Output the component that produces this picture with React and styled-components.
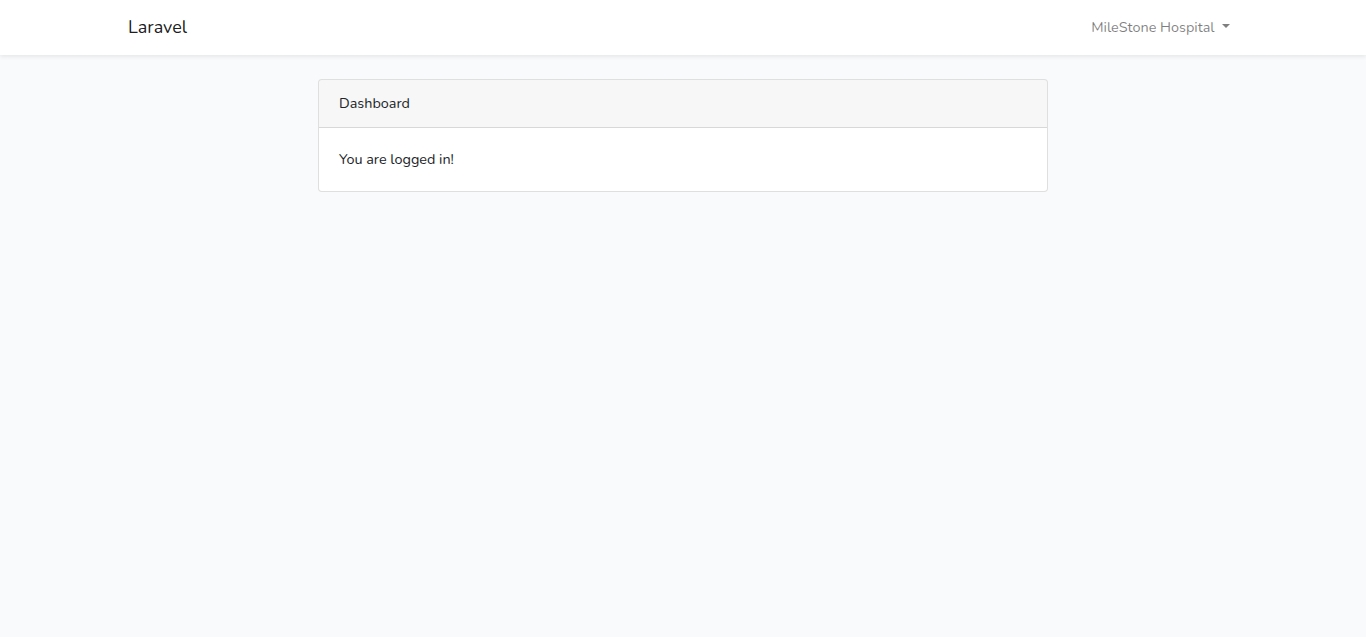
import React from "react";
import styled, { createGlobalStyle } from "styled-components";

const Global = createGlobalStyle`
  *, *::before, *::after { box-sizing: border-box; }
  html, body { margin: 0; padding: 0; }
  body {
    background: #f8fafc;
    font-family: Nunito, Lato, "Noto Sans", sans-serif;
    font-size: 14.4px;
    line-height: 1.6;
    color: #212529;
    min-height: 100vh;
  }
`;

const Navbar = styled.nav`
  background: #fff;
  box-shadow: 0 0.125rem 0.25rem rgba(0, 0, 0, 0.075);
  padding: 8px 16px;
`;

const Container = styled.div`
  max-width: 1140px;
  margin: 0 auto;
  padding: 0 15px;
  display: flex;
  align-items: center;
  justify-content: ${(p) => p.$justify || "flex-start"};
`;

const Brand = styled.a`
  font-size: 18px;
  padding: 5px 0;
  color: rgba(0, 0, 0, 0.9);
  text-decoration: none;
  line-height: 1.6;
`;

const NavLink = styled.a`
  display: inline-block;
  padding: 8px;
  color: rgba(0, 0, 0, 0.5);
  text-decoration: none;
`;

const Caret = styled.span`
  display: inline-block;
  margin-left: 0.255em;
  vertical-align: 0.255em;
  border-top: 0.3em solid;
  border-right: 0.3em solid transparent;
  border-left: 0.3em solid transparent;
  border-bottom: 0;
`;

const Main = styled.main`
  padding: 24px 0;
`;

const Column = styled.div`
  width: 760px;
  margin: 0 auto;
  padding: 0 15px;
`;

const Card = styled.div`
  background: #fff;
  border: 1px solid rgba(0, 0, 0, 0.125);
  border-radius: 4px;
  overflow: hidden;
`;

const CardHeader = styled.div`
  padding: 12px 20px;
  background: rgba(0, 0, 0, 0.03);
  border-bottom: 1px solid rgba(0, 0, 0, 0.125);
`;

const CardBody = styled.div`
  padding: 20px;
`;

export default function App() {
  return (
    <>
      <Global />
      <Navbar>
        <Container $justify="space-between">
          <Brand href="#">Laravel</Brand>
          <NavLink href="#">
            MileStone Hospital <Caret />
          </NavLink>
        </Container>
      </Navbar>
      <Main>
        <Column>
          <Card>
            <CardHeader>Dashboard</CardHeader>
            <CardBody>You are logged in!</CardBody>
          </Card>
        </Column>
      </Main>
    </>
  );
}
